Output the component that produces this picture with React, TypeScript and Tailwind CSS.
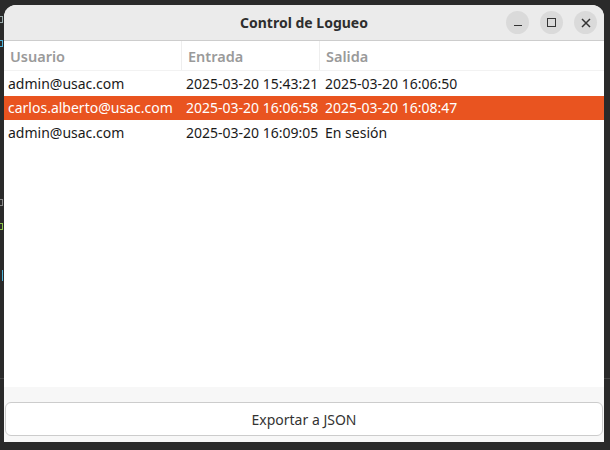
import React from "react";

const rows = [
  { u: "admin@usac.com", e: "2025-03-20 15:43:21", s: "2025-03-20 16:06:50", sel: false },
  { u: "carlos.alberto@usac.com", e: "2025-03-20 16:06:58", s: "2025-03-20 16:08:47", sel: true },
  { u: "admin@usac.com", e: "2025-03-20 16:09:05", s: "En sesión", sel: false },
];

export default function App() {
  return (
    <div
      className="relative w-[610px] h-[450px] bg-[#2a2a2a] overflow-hidden"
      style={{ fontFamily: "'Noto Sans', 'Open Sans', sans-serif" }}
    >
      {/* background editor fragments */}
      <div className="absolute left-0 top-[378px] w-[610px] h-px bg-[#444]" />
      <div className="absolute left-0 top-[16px] w-[3px] h-[7px] border border-l-0 border-[#9aa]" />
      <div className="absolute left-0 top-[40px] w-[3px] h-[7px] border border-l-0 border-[#4fb3d9]" />
      <div className="absolute left-0 top-[199px] w-[3px] h-[7px] border border-l-0 border-[#888]" />
      <div className="absolute left-0 top-[223px] w-[3px] h-[7px] border border-l-0 border-[#8bc34a]" />
      <div className="absolute left-0 top-[270px] w-[3px] h-[11px] border-r border-[#4fb3d9]" />

      <div className="absolute left-[4px] top-[5px] w-[600px] h-[437px] flex flex-col bg-[#f7f7f7] rounded-t-[12px] overflow-hidden">
        {/* title bar */}
        <div className="relative h-[36px] shrink-0 bg-[#ebebeb] border-b border-[#cdcdcd] flex items-center justify-center">
          <span className="text-[14px] font-bold text-[#2e2e2e]">Control de Logueo</span>
          <div className="absolute right-[7px] top-[6px] flex gap-[11px]">
            <div className="w-[23px] h-[23px] rounded-full bg-[#dadada] flex items-center justify-center">
              <div className="w-[8px] h-[1.5px] bg-[#333] mt-[6px]" />
            </div>
            <div className="w-[23px] h-[23px] rounded-full bg-[#dadada] flex items-center justify-center">
              <div className="w-[9px] h-[9px] border-[1.5px] border-[#333]" />
            </div>
            <div className="w-[23px] h-[23px] rounded-full bg-[#dadada] flex items-center justify-center">
              <svg width="10" height="10" viewBox="0 0 10 10">
                <path d="M1 1 L9 9 M9 1 L1 9" stroke="#333" strokeWidth="1.5" />
              </svg>
            </div>
          </div>
        </div>

        {/* table */}
        <div className="h-[346px] shrink-0 bg-white text-[14px]">
          <div className="flex h-[30px] items-center border-b border-[#f2f2f2] text-[#9a9a9a] font-semibold text-[14.5px]">
            <div className="w-[178px] h-full flex items-center pl-[6px] pt-[3px] border-r border-[#eeeeee]">Usuario</div>
            <div className="w-[138px] h-full flex items-center pl-[6px] pt-[3px] border-r border-[#eeeeee]">Entrada</div>
            <div className="flex-1 h-full flex items-center pl-[6px] pt-[3px]">Salida</div>
          </div>
          {rows.map((r, i) => (
            <div
              key={i}
              className={
                "flex h-[24.5px] items-center " +
                (r.sel ? "bg-[#e95420] text-white" : "text-[#1a1a1a]")
              }
            >
              <div className="w-[178px] pl-[4px] whitespace-nowrap">{r.u}</div>
              <div className="w-[139px] pl-[4px] whitespace-nowrap">{r.e}</div>
              <div className="flex-1 pl-[4px] whitespace-nowrap">{r.s}</div>
            </div>
          ))}
        </div>

        {/* bottom */}
        <div className="flex-1 pt-[15px] pb-[5px] px-[1px] flex">
          <button className="flex-1 h-[34px] bg-white border border-[#cccccc] rounded-[6px] text-[14px] text-[#333]">
            Exportar a JSON
          </button>
        </div>
      </div>
    </div>
  );
}
